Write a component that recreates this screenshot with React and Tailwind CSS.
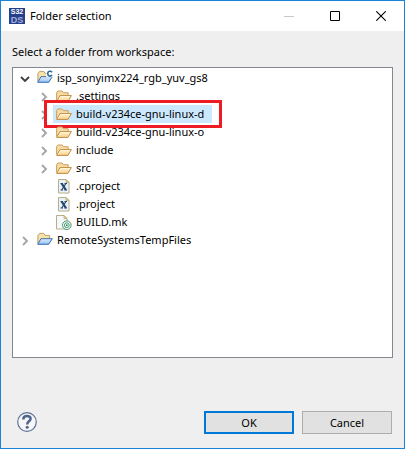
import { useState } from 'react'

const NODES = [
  { name: 'isp_sonyimx224_rgb_yuv_gs8', level: 0, kind: 'cproject', open: true },
  { name: '.settings', level: 1, kind: 'folder' },
  { name: 'build-v234ce-gnu-linux-d', level: 1, kind: 'folder', marked: true },
  { name: 'build-v234ce-gnu-linux-o', level: 1, kind: 'folder' },
  { name: 'include', level: 1, kind: 'folder' },
  { name: 'src', level: 1, kind: 'folder' },
  { name: '.cproject', level: 1, kind: 'xml' },
  { name: '.project', level: 1, kind: 'xml' },
  { name: 'BUILD.mk', level: 1, kind: 'make' },
  { name: 'RemoteSystemsTempFiles', level: 0, kind: 'project' },
]

/**
 * Workspace folder picker: title bar, resource tree and dialog buttons.
 */
export default function App() {
  const [selected, setSelected] = useState('build-v234ce-gnu-linux-d')

  return (
    <main className="flex min-h-screen flex-col border border-[#1883d7] bg-[#efefef] font-['Noto_Sans','Open_Sans',sans-serif] text-[11px] leading-[18px] text-black">
      <TitleBar />
      <div className="flex flex-1 flex-col px-[11px] pt-3">
        <h2 id="tree-label">Select a folder from workspace:</h2>
        <ul
          role="tree"
          aria-labelledby="tree-label"
          className="mt-1.5 flex-1 border border-[#828790] bg-white pt-px"
        >
          {NODES.map((node) => (
            <TreeRow
              key={node.name}
              node={node}
              selected={node.name === selected}
              onSelect={() => setSelected(node.name)}
            />
          ))}
        </ul>
      </div>
      <footer className="flex h-[90px] items-end gap-2 pr-3 pb-3.5 pl-4">
        <button type="button" aria-label="Help" className="mr-auto mb-0.5">
          <HelpIcon />
        </button>
        <button type="button" className="h-[23px] w-[90px] border-2 border-[#0078d7] bg-[#e1e1e1] leading-[18px]">
          OK
        </button>
        <button type="button" className="h-[23px] w-[90px] border border-[#adadad] bg-[#e1e1e1] leading-[18px]">
          Cancel
        </button>
      </footer>
    </main>
  )
}

function TitleBar() {
  return (
    <header className="flex h-[30px] items-center bg-white pl-2">
      <AppIcon />
      <h1 className="ml-[5px] flex-1">Folder selection</h1>
      <button type="button" aria-label="Minimize" className="grid h-full w-[46px] place-items-center" disabled>
        <svg width="10" height="10" viewBox="0 0 10 10" shapeRendering="crispEdges">
          <path d="M0 5.5h10" stroke="#c8c8c8" />
        </svg>
      </button>
      <button type="button" aria-label="Maximize" className="grid h-full w-[46px] place-items-center">
        <svg width="10" height="10" viewBox="0 0 10 10" fill="none">
          <path d="M.5.5h9v9h-9z" stroke="#000" />
        </svg>
      </button>
      <button type="button" aria-label="Close" className="grid h-full w-[46px] place-items-center">
        <svg width="10" height="10" viewBox="0 0 10 10">
          <path d="M.3.3l9.4 9.4M9.7.3L.3 9.7" stroke="#000" strokeWidth="1.1" />
        </svg>
      </button>
    </header>
  )
}

function TreeRow({ node, selected, onSelect }) {
  const leaf = node.kind === 'xml' || node.kind === 'make'

  return (
    <li
      role="treeitem"
      aria-selected={selected}
      aria-expanded={leaf ? undefined : Boolean(node.open)}
      onClick={onSelect}
      className={['relative flex h-[18px]', node.level === 0 ? 'pl-1.5' : 'pl-[25px]'].join(' ')}
    >
      <span className="grid w-3 place-items-center pt-0.5">{!leaf && <Chevron open={node.open} />}</span>
      <span
        className={[
          'ml-[3px] flex items-center gap-1 pr-2 pl-[3px]',
          selected ? 'bg-[#cce8ff]' : '',
        ].join(' ')}
      >
        <NodeIcon kind={node.kind} />
        <span>{node.name}</span>
      </span>
      {node.marked && (
        <span className="pointer-events-none absolute -top-[5px] left-[31px] h-7 w-[178px] border-[3px] border-[#ed1c24]" />
      )}
    </li>
  )
}

function Chevron({ open }) {
  return open ? (
    <svg width="10" height="10" viewBox="0 0 10 10" fill="none">
      <path d="M1 3l4 4 4-4" stroke="#404040" strokeWidth="1.9" />
    </svg>
  ) : (
    <svg width="10" height="10" viewBox="0 0 10 10" fill="none">
      <path d="M3 1l4 4-4 4" stroke="#a6a6a6" strokeWidth="1.9" />
    </svg>
  )
}

function NodeIcon({ kind }) {
  if (kind === 'folder') {
    return (
      <svg width="16" height="16" viewBox="0 0 16 16" strokeLinejoin="round">
        <defs>
          <linearGradient id="flap" x1="0" y1="0" x2="0" y2="1">
            <stop offset="0" stopColor="#fff3cd" />
            <stop offset="1" stopColor="#f8d08c" />
          </linearGradient>
        </defs>
        <path d="M.6 12.500V4.600L1.800 3h4.400l1.200 1.700h4.800v3" fill="#f6dba6" stroke="#cfa05a" />
        <path d="M.7 13.400L4 7.600h11.400l-3.500 5.800z" fill="url(#flap)" stroke="#c08a41" />
        <path d="M2.400 12.300l2.300-3.700h9" fill="none" stroke="#fffbe8" strokeWidth=".8" />
      </svg>
    )
  }
  if (kind === 'xml') {
    return (
      <svg width="16" height="16" viewBox="0 0 16 16">
        <path d="M2.500 1.500h7.500l3 3v10.500h-10.500z" fill="#e9f2fb" stroke="#b8ae86" />
        <path d="M10 1.500v3h3z" fill="#e3d08e" stroke="#b9a468" strokeWidth=".7" />
        <path d="M4.500 5.500h2.500M8.500 5.500h2.500M4.500 12h2.500M8.500 12h2.500" stroke="#23466f" />
        <path d="M5.700 5.500l4.200 6.500" stroke="#23466f" strokeWidth="2.200" />
        <path d="M9.900 5.500l-4.200 6.500" stroke="#23466f" strokeWidth="1.200" />
      </svg>
    )
  }
  if (kind === 'make') {
    return (
      <svg width="16" height="16" viewBox="0 0 16 16" fill="none">
        <path d="M.5 1.500h7.500l3 3v10.500h-10.500z" fill="#f4f8fd" stroke="#b8ae86" />
        <path d="M8 1.500v3h3z" fill="#e8d79d" stroke="#b9a468" strokeWidth=".7" />
        <circle cx="10.800" cy="11.200" r="4.300" fill="#fff" stroke="#3d9466" />
        <circle cx="10.800" cy="11.200" r="2.400" stroke="#3d9466" />
        <circle cx="10.800" cy="11.200" r=".9" fill="#23804f" />
      </svg>
    )
  }
  return (
    <svg width="16" height="16" viewBox="0 0 16 16" strokeLinejoin="round">
      <defs>
        <linearGradient id="blue-flap" x1="0" y1="0" x2="0" y2="1">
          <stop offset="0" stopColor="#e4f1fd" />
          <stop offset="1" stopColor="#8dbcf0" />
        </linearGradient>
      </defs>
      <path d="M.9 11.500V3.500L2.600 1.400h4.200l1.300 2h4.500v4" fill="#f8e2a6" stroke="#b5a06c" />
      <path d="M.7 12.300l3.300-5.600h11.300l-3.600 5.600z" fill="url(#blue-flap)" stroke="#3c6db3" />
      {kind === 'cproject' && (
        <>
          <path d="M9.300 0h6.700v7.200h-6.700z" fill="#fff" />
          <path d="M15 2.300C13.800.5 10.700.9 10.700 3.600s3.200 3.200 4.300 1.400" fill="none" stroke="#2c6b9c" strokeWidth="1.600" />
        </>
      )}
    </svg>
  )
}

function AppIcon() {
  return (
    <svg width="16" height="16" viewBox="0 0 16 16" aria-hidden="true">
      <rect width="16" height="16" fill="#263f8c" />
      <text x="8" y="6" textAnchor="middle" fontFamily="Liberation Sans" fontWeight="700" fontSize="7" fill="#fff">
        S32
      </text>
      <text x="8" y="15" textAnchor="middle" fontFamily="Liberation Sans" fontWeight="700" fontSize="9" fill="#a3b1da">
        DS
      </text>
    </svg>
  )
}

function HelpIcon() {
  return (
    <svg width="20" height="20" viewBox="0 0 20 20" fill="none">
      <circle cx="10" cy="10" r="9.300" fill="#f6f6f6" stroke="#5d7295" strokeWidth="1.200" />
      <path d="M6.300 7.400c0-4.600 7.300-4.400 7.300-.7 0 2.700-3.400 2.600-3.400 5.800" stroke="#4d648c" strokeWidth="2.500" />
      <circle cx="10.200" cy="15.200" r="1.500" fill="#4d648c" />
    </svg>
  )
}
